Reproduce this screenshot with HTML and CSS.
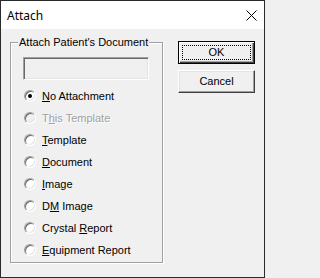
FILE: index.html
```html
<!DOCTYPE html>
<html>
<head>
<meta charset="utf-8">
<link rel="stylesheet" href="styles.css">
</head>
<body>
<div class="window">
  <div class="titlebar">
    <span class="title">Attach</span>
    <svg class="close" width="11" height="11" viewBox="0 0 11 11"><path d="M0.5 0.5 L10.5 10.5 M10.5 0.5 L0.5 10.5" stroke="#000" stroke-width="1" fill="none"/></svg>
  </div>
  <div class="content">
    <fieldset class="group">
      <legend class="group-label">Attach Patient's Document</legend>
      <div class="textbox"></div>
      <div class="options">
        <div class="option"><span class="radio checked"></span><span class="label"><u>N</u>o Attachment</span></div>
        <div class="option disabled"><span class="radio"></span><span class="label">T<u>h</u>is Template</span></div>
        <div class="option"><span class="radio"></span><span class="label"><u>T</u>emplate</span></div>
        <div class="option"><span class="radio"></span><span class="label"><u>D</u>ocument</span></div>
        <div class="option"><span class="radio"></span><span class="label"><u>I</u>mage</span></div>
        <div class="option"><span class="radio"></span><span class="label">D<u>M</u> Image</span></div>
        <div class="option"><span class="radio"></span><span class="label">Crystal <u>R</u>eport</span></div>
        <div class="option"><span class="radio"></span><span class="label"><u>E</u>quipment Report</span></div>
      </div>
    </fieldset>
    <div class="buttons">
      <div class="btn default"><span>OK</span></div>
      <div class="btn">Cancel</div>
    </div>
  </div>
</div>
</body>
</html>
```

FILE: styles.css
```css
html, body {
  margin: 0;
  padding: 0;
  background: #f0f0f0;
}
.window {
  width: 265px;
  height: 278px;
  box-sizing: border-box;
  border: 1px solid #2b2b2b;
  background: #f0f0f0;
  display: flex;
  flex-direction: column;
  font-family: "Liberation Sans", Arial, sans-serif;
  font-size: 11px;
  color: #000;
  overflow: hidden;
}
.titlebar {
  height: 28px;
  background: #fff;
  display: flex;
  align-items: center;
  justify-content: space-between;
  padding: 0 7px 0 6px;
  flex: none;
}
.title {
  font-family: "Noto Sans", sans-serif;
  font-size: 12px;
  line-height: 16px;
  margin-top: 1px;
}
.close {
  display: block;
  margin-top: 1px;
}
.content {
  display: flex;
  align-items: flex-start;
  padding: 7px 0 0 9px;
}
.group {
  margin: 0;
  padding: 0 0 0 12px;
  width: 153px;
  height: 227px;
  box-sizing: border-box;
  border: 1px solid #a0a0a0;
  box-shadow: inset 1px 1px 0 #fff, 1px 1px 0 #fff;
  min-width: 0;
  overflow: visible;
}
.group-label {
  margin-left: -5px;
  padding: 0 1px;
  line-height: 13px;
  background: #f0f0f0;
}
.textbox {
  margin-top: 8px;
  width: 126px;
  height: 23px;
  box-sizing: border-box;
  border: 1px solid;
  border-color: #a0a0a0 #fff #fff #a0a0a0;
  box-shadow: inset 1px 1px 0 #696969, inset -1px -1px 0 #e3e3e3;
  background: #f0f0f0;
}
.options {
  margin-top: 5px;
  display: flex;
  flex-direction: column;
}
.option {
  height: 22px;
  display: flex;
  align-items: center;
  padding-left: 1px;
}
.radio {
  width: 12px;
  height: 12px;
  box-sizing: border-box;
  border-radius: 50%;
  border: 1px solid;
  border-color: #a0a0a0 #fff #fff #a0a0a0;
  box-shadow: inset 1px 1px 0 #696969, inset -1px -1px 0 #e3e3e3;
  background: #fff;
  display: flex;
  align-items: center;
  justify-content: center;
  flex: none;
}
.radio.checked::after {
  content: "";
  width: 4px;
  height: 4px;
  border-radius: 50%;
  background: #000;
}
.disabled .radio {
  background: #f0f0f0;
}
.label {
  margin-left: 6px;
  line-height: 13px;
  white-space: nowrap;
}
.label u {
  text-decoration-thickness: 1px;
  text-underline-offset: 1px;
}
.disabled .label {
  color: #a0a0a0;
  text-shadow: 1px 1px 0 #fff;
}
.buttons {
  margin-left: 15px;
  margin-top: 5px;
  display: flex;
  flex-direction: column;
  gap: 6px;
}
.btn {
  width: 77px;
  height: 23px;
  box-sizing: border-box;
  border: 1px solid;
  border-color: #fff #404040 #404040 #fff;
  box-shadow: inset -1px -1px 0 #a0a0a0, inset 1px 1px 0 #e3e3e3;
  display: flex;
  align-items: center;
  justify-content: center;
  line-height: 13px;
}
.btn.default {
  border-color: #000;
  box-shadow: inset 1px 1px 0 #fff, inset -1px -1px 0 #404040, inset -2px -2px 0 #a0a0a0;
  position: relative;
}
.btn.default::before {
  content: "";
  position: absolute;
  left: 3px;
  top: 3px;
  right: 3px;
  bottom: 3px;
  border: 1px dotted #000;
}
```
